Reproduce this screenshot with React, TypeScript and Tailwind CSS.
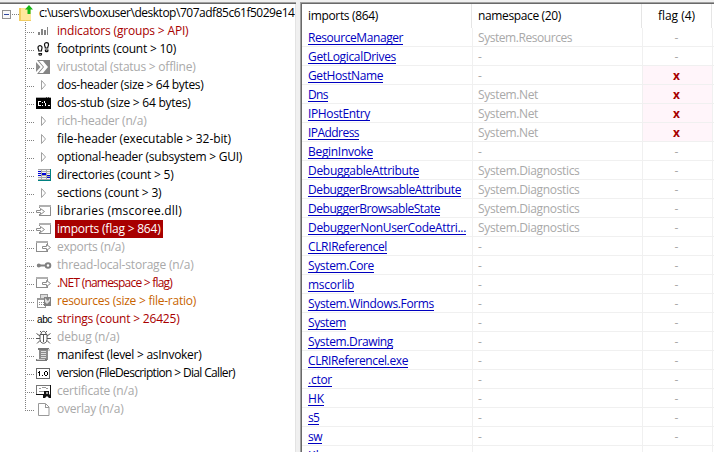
import { useLayoutEffect, useRef, useState } from "react";
import type { ReactNode } from "react";

/** Text whose tracking is tuned so that it occupies the given width. */
function Fit({ text, width, className = "" }: { text: string; width: number; className?: string }) {
  const ref = useRef<HTMLSpanElement>(null);
  const [spacing, setSpacing] = useState(0);
  useLayoutEffect(() => {
    if (ref.current) {
      setSpacing((width - ref.current.getBoundingClientRect().width) / text.length);
    }
  }, []);
  return (
    <span ref={ref} className={`inline-block whitespace-pre ${className}`} style={{ letterSpacing: `${spacing}px` }}>
      {text}
    </span>
  );
}

function Svg({ children }: { children: ReactNode }) {
  return (
    <svg width="18" height="16" viewBox="0 0 18 16" className="shrink-0" shapeRendering="crispEdges">
      {children}
    </svg>
  );
}

const Arrow = () => (
  <Svg>
    <path d="M6.5 3.5v9l4-4.5z" fill="#fff" stroke="#a0a0a0" shapeRendering="auto" />
  </Svg>
);

const Bars = () => (
  <Svg>
    <path d="M3 9h2v3H3zM6 6h2v6H6zM9 7h2v5H9zM12 4h1v8h-1z" fill="#858585" />
  </Svg>
);

const Feet = () => (
  <Svg>
    <g fill="#fff" stroke="#111" strokeWidth="1.2" shapeRendering="auto">
      <path d="M3 6.500c0-2.500 4-2.500 4 0 0 2-.7 2-.6 3.500H3.800C4 8.500 3 8 3 6.500zM4 12.500h2.500v1c0 1-2.500 1-2.500 0z" />
      <path d="M9.500 3.500c0-2.500 4-2.500 4 0 0 2-.9 2-.8 3.500h-2.400c0-1.500-.8-2-.8-3.500zM10.400 9h2.500v1c0 1-2.500 1-2.500 0z" />
    </g>
  </Svg>
);

const Virus = () => (
  <Svg>
    <path d="M1 1h14v14H1z" fill="#858585" />
    <path d="M4 2h4l5 6-5 6H4l5-6z" fill="#fff" shapeRendering="auto" />
    <path d="M1 1h1l6 7-6 7H1z" fill="#fff" shapeRendering="auto" />
    <path d="M1 3l4.500 5L1 13z" fill="#8c8c8c" shapeRendering="auto" />
  </Svg>
);

const Dos = () => (
  <Svg>
    <path d="M1 2h15v12H1z" fill="#000" />
    <path d="M1 2h15v1H1z" fill="#aaa" />
    <path d="M11 2h1v1h-1zM13 2h1v1h-1z" fill="#444" />
    <path d="M3 6h3v1H3zM3 7h1v3H3zM3 10h3v1H3zM7 7h1v1H7zM7 10h1v1H7zM9 6h1v2H9zM10 8h1v3h-1zM13 10h2v1h-2z" fill="#fff" />
  </Svg>
);

const Dirs = () => (
  <Svg>
    <path d="M3 2h13v12H3z" fill="#a8a8a8" />
    <path d="M3 3h3v1H3zM3 5h3v1H3zM3 7h3v1H3zM3 9h3v1H3zM3 11h3v1H3zM7 3h4v1H7zM7 5h4v1H7zM7 7h4v1H7zM7 9h4v1H7zM7 11h4v1H7zM12 3h3v1h-3zM12 5h3v1h-3zM12 7h3v1h-3zM12 11h3v1h-3z" fill="#f4f4f4" />
    <path d="M15 2h1v12H3v-1h12z" fill="#008080" />
    <path d="M3 4h3v1H3zM3 6h3v1H3zM3 8h3v1H3zM7 6h4v2H7zM12 8h3v1h-3zM12 10h3v1h-3z" fill="#0000d8" />
  </Svg>
);

const Import = () => (
  <Svg>
    <path d="M4.500 5V3.500h11v9h-11V11" fill="#fff" stroke="#8c8c8c" />
    <path d="M4 2h12v2H4z" fill="#b0b0b0" />
    <path d="M1.500 7.500h4v-2l4 3-4 3v-2h-4z" fill="#fff" stroke="#8c8c8c" shapeRendering="auto" />
  </Svg>
);

const Export = () => (
  <Svg>
    <path d="M1.500 3.500h11v9h-11z" fill="#fff" stroke="#8c8c8c" />
    <path d="M1 2h12v2H1z" fill="#b0b0b0" />
    <path d="M7.500 7.500h4v-2l4 3-4 3v-2h-4z" fill="#fff" stroke="#8c8c8c" shapeRendering="auto" />
  </Svg>
);

const Tls = () => (
  <Svg>
    <g fill="#fff" stroke="#808080" strokeWidth="2" shapeRendering="auto">
      <circle cx="13" cy="8.500" r="2.300" />
      <path d="M5 8.500h6" />
      <circle cx="3.800" cy="8.500" r="1" />
    </g>
  </Svg>
);

const Resources = () => (
  <Svg>
    <path d="M5.500 1.500h7v6h-7z" fill="#ddd" stroke="#999" />
    <path d="M2.500 5.500h8v9h-8z" fill="#fff" stroke="#999" />
    <path d="M2 5h9v2H2z" fill="#999" />
    <path d="M4 9h1v1H4zM6 9h1v1H6zM8 9h1v1H8zM4 11h1v1H4zM6 11h1v1H6zM8 11h1v1H8z" fill="#888" />
    <path d="M9 4h7v9H9z" fill="#808080" />
    <path d="M10 5l3 3 2-3v3l-3 3-2-2z" fill="#ddd" shapeRendering="auto" />
  </Svg>
);

const Abc = () => (
  <span className="flex h-4 w-[18px] shrink-0 items-center pt-[2px] pl-[2px] font-['Liberation_Sans',sans-serif] text-[10px] leading-none text-black">
    <Fit text="abc" width={15} />
  </span>
);

const Bug = () => (
  <Svg>
    <g fill="none" stroke="#555" shapeRendering="auto">
      <path d="M5 5.500h7v5c0 5-7 5-7 0zM6 5c0-3.500 5-3.500 5 0M8.500 6v7M5 2l1.500 1.500M12 2l-1.500 1.500M1.500 4.500L5 7M1 9.500h4M2 14.500l3-3M15.500 4.500L12 7M16 9.500h-4M15 14.500l-3-3" />
    </g>
  </Svg>
);

const Manifest = () => (
  <Svg>
    <path d="M4 2h9v11H4z" fill="#8c8c8c" />
    <path d="M3 1h11v2H3zM1 12h11v2H1z" fill="#777" />
    <path d="M2 12h8v1H2zM13 2h2v2h-2z" fill="#ccc" />
    <path d="M6 4h5v1H6zM6 6h5v1H6zM6 8h5v1H6zM6 10h5v1H6z" fill="#ddd" />
  </Svg>
);

const Version = () => (
  <Svg>
    <path d="M1.500 3.500h13v10h-13z" fill="#fff" stroke="#666" />
    <path d="M4 6h1v5H4zM3 7h1v1H3zM7 10h1v1H7zM10 6h2v1h-2zM9 7h1v3H9zM12 7h1v3h-1zM10 10h2v1h-2z" fill="#000" />
  </Svg>
);

const Cert = () => (
  <Svg>
    <path d="M1.500 2.500h14v9h-14z" fill="#fff" stroke="#777" />
    <path d="M1 11h8v1H1zM15 2h1v10h-1z" fill="#111" />
    <path d="M4 5h2v1H4zM7 4h4v1H7zM11 5h2v1h-2zM4 8h5v1H4z" fill="#999" />
    <path d="M9 8h5v4h2v3h-2l-2-2-2 2H8v-3h1z" fill="#111" shapeRendering="auto" />
    <path d="M11 9h2v2h-2z" fill="#aaa" />
  </Svg>
);

const Page = () => (
  <Svg>
    <path d="M3.500 2.500h7l3.500 3.500v8.500H3.500z" fill="#fff" stroke="#999" shapeRendering="auto" />
    <path d="M10.500 2.500v4H14" fill="none" stroke="#999" />
  </Svg>
);

type Node = [string, number, () => ReactNode, string?];

const RED = "text-[#a80000]";
const DIM = "text-[#a9a9a9]";

const nodes: Node[] = [
  ["indicators (groups > API)", 131.5, Bars, RED],
  ["footprints (count > 10)", 119, Feet],
  ["virustotal (status > offline)", 138.5, Virus, DIM],
  ["dos-header (size > 64 bytes)", 146.5, Arrow],
  ["dos-stub (size > 64 bytes)", 133.5, Dos],
  ["rich-header (n/a)", 89.5, Arrow, DIM],
  ["file-header (executable > 32-bit)", 174, Arrow],
  ["optional-header (subsystem > GUI)", 185, Arrow],
  ["directories (count > 5)", 116.5, Dirs],
  ["sections (count > 3)", 104.5, Arrow],
  ["libraries (mscoree.dll)", 125, Import],
  ["imports (flag > 864)", 103.5, Import, "bg-[#a80000] text-white"],
  ["exports (n/a)", 67.5, Export, DIM],
  ["thread-local-storage (n/a)", 136.5, Tls, DIM],
  [".NET (namespace > flag)", 115, Export, RED],
  ["resources (size > file-ratio)", 139, Resources, "text-[#c86400]"],
  ["strings (count > 26425)", 122.5, Abc, RED],
  ["debug (n/a)", 62.5, Bug, DIM],
  ["manifest (level > asInvoker)", 144.5, Manifest],
  ["version (FileDescription > Dial Caller)", 178, Version],
  ["certificate (n/a)", 80.5, Cert, DIM],
  ["overlay (n/a)", 66.5, Page, DIM],
];

type Row = [string, number, string?, boolean?];

const rows: Row[] = [
  ["ResourceManager", 95, "System.Resources"],
  ["GetLogicalDrives", 88],
  ["GetHostName", 75, undefined, true],
  ["Dns", 20, "System.Net", true],
  ["IPHostEntry", 62, "System.Net", true],
  ["IPAddress", 51, "System.Net", true],
  ["BeginInvoke", 65],
  ["DebuggableAttribute", 111, "System.Diagnostics"],
  ["DebuggerBrowsableAttribute", 153, "System.Diagnostics"],
  ["DebuggerBrowsableState", 132, "System.Diagnostics"],
  ["DebuggerNonUserCodeAttri...", 158, "System.Diagnostics"],
  ["CLRIReferencel", 79],
  ["System.Core", 66],
  ["mscorlib", 46],
  ["System.Windows.Forms", 126],
  ["System", 38],
  ["System.Drawing", 85],
  ["CLRIReferencel.exe", 100],
  [".ctor", 24],
  ["HK", 16],
  ["s5", 11],
  ["sw", 14],
  ["Kl", 11],
];

const namespaceWidth: Record<string, number> = {
  "System.Resources": 94,
  "System.Net": 60,
  "System.Diagnostics": 101.5,
};

function Tree() {
  return (
    <div className="flex h-full w-[296px] shrink-0 flex-col overflow-hidden border-r border-[#e3e3e3] bg-white">
      <div className="flex h-[18px] shrink-0 items-center">
        <svg width="36" height="18" viewBox="0 0 36 18" className="shrink-0" shapeRendering="crispEdges">
          <rect x="2.500" y="6.500" width="8" height="8" rx="1" fill="#f8f8f8" stroke="#919191" />
          <path d="M4 10h5v1H4z" fill="#3048a0" />
          <path d="M12 10.500h7" stroke="#808080" strokeDasharray="1 1" />
          <path d="M19 4h8v13h-8z" fill="#ffe48f" />
          <path d="M20 5h11v12H20z" fill="#ffe79c" />
          <path d="M19 4h2v13h-2zM21 16h10v1h-10z" fill="#f1cd62" />
          <path d="M29 1l4 4.500h-2.500v4.500h-3V5.500H25z" fill="#16b616" shapeRendering="auto" />
        </svg>
        <span className="pl-[3px]">
          <Fit text={"c:\\users\\vboxuser\\desktop\\707adf85c61f5029e14"} width={255.500} />
        </span>
      </div>
      {nodes.map(([label, width, Icon, tone = "text-black"], i) => (
        <div key={label} className="flex h-[18px] shrink-0 items-center">
          <svg width="35" height="18" viewBox="0 0 35 18" className="shrink-0" shapeRendering="crispEdges">
            <path d={i === nodes.length - 1 ? "M25.500 0v11" : "M25.500 0v18"} stroke="#808080" strokeDasharray="1 1" />
            <path d="M27 10.500h9" stroke="#808080" strokeDasharray="1 1" />
          </svg>
          <Icon />
          <span className={`ml-[2px] flex h-[18px] items-center px-[2px] ${tone}`}>
            <Fit text={label} width={width} />
          </span>
        </div>
      ))}
    </div>
  );
}

function Table() {
  return (
    <div className="flex h-full min-w-0 flex-1 flex-col overflow-hidden border-l border-[#696969] bg-white">
      <div className="flex h-6 shrink-0 items-center text-black">
        <div className="flex h-full w-[170px] items-center border-r border-[#e5e5e5] pl-[6px]">
          <Fit text="imports (864)" width={70} />
        </div>
        <div className="flex h-full w-[170px] items-center border-r border-[#e5e5e5] pl-[6px]">
          <Fit text="namespace (20)" width={83} />
        </div>
        <div className="flex h-full w-[70px] items-center justify-center border-r border-[#e5e5e5]">
          <Fit text="flag (4)" width={37} />
        </div>
      </div>
      {rows.map(([name, width, ns, flagged]) => (
        <div key={name} className="flex h-[19px] shrink-0 border-b border-[#f0f0f0]">
          <div className="flex w-[171px] shrink-0 items-center border-r border-[#f0f0f0] pt-[2px] pl-[6px] text-[#0000c0]">
            <Fit
              text={name}
              width={width}
              className="underline decoration-1 underline-offset-2 [text-decoration-skip-ink:none]"
            />
          </div>
          <div className={`flex w-[170px] shrink-0 items-center border-r border-[#f0f0f0] pt-[2px] pl-[5px] ${DIM}`}>
            {ns ? <Fit text={ns} width={namespaceWidth[ns]} /> : "-"}
          </div>
          <div
            className={`flex w-[70px] shrink-0 items-center justify-center border-r border-[#f0f0f0] pt-[2px] pr-[2px] ${
              flagged ? "bg-[#fff5fa] font-bold text-[#a80000]" : "text-[#a9a9a9]"
            }`}
          >
            {flagged ? "x" : "-"}
          </div>
        </div>
      ))}
    </div>
  );
}

export default function App() {
  return (
    <div className="flex h-[452px] w-[714px] flex-col overflow-hidden bg-[#f0f0f0] pt-[2px] font-['Open_Sans','Noto_Sans',sans-serif] text-[12px] leading-[16px]">
      <div className="flex min-h-0 flex-1">
        <div className="h-full border-t border-[#a0a0a0]">
          <div className="h-full border-t border-[#696969]">
            <Tree />
          </div>
        </div>
        <div className="ml-1 h-full min-w-0 flex-1 border-t border-l border-[#a0a0a0]">
          <div className="h-full border-t border-[#696969]">
            <Table />
          </div>
        </div>
      </div>
    </div>
  );
}
